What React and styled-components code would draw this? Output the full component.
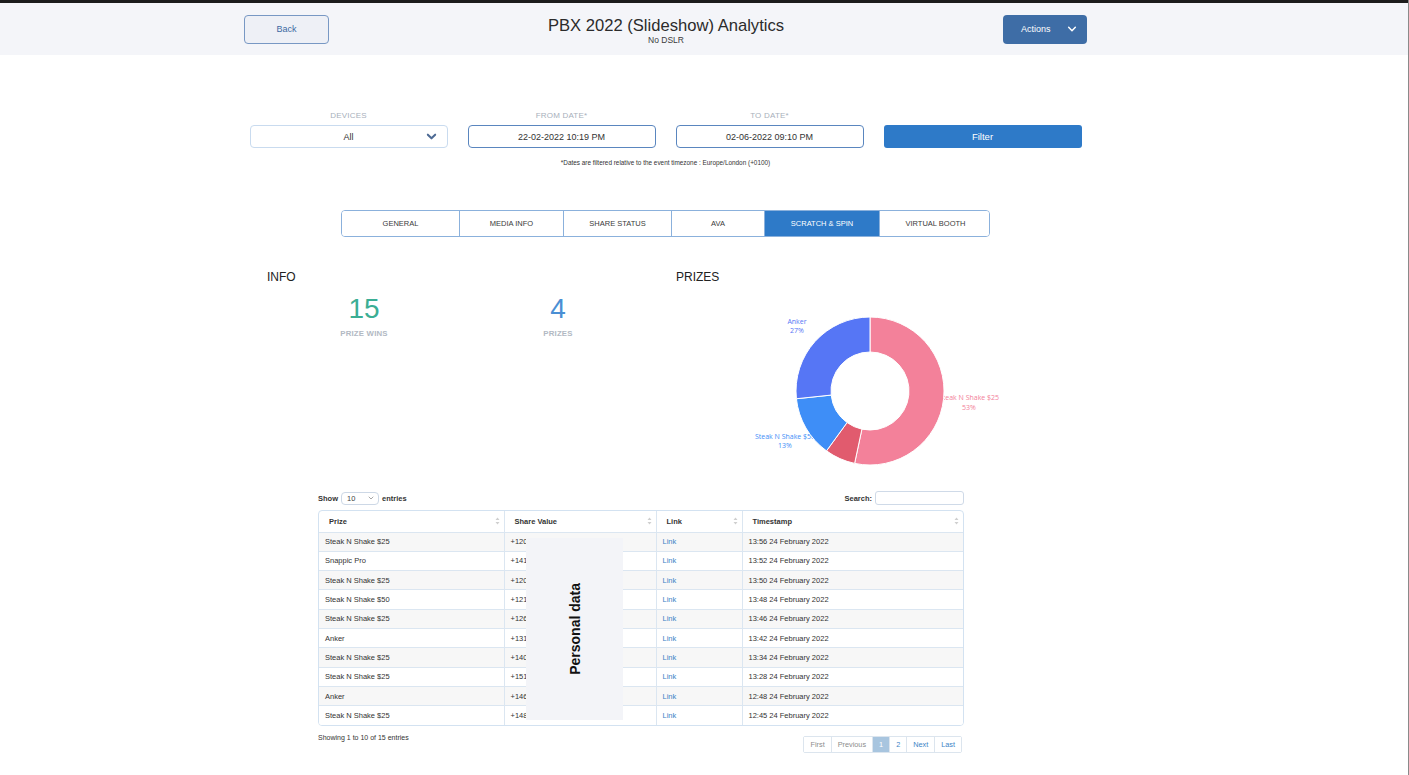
import React from 'react';
import styled, { createGlobalStyle } from 'styled-components';

const prizes = [
  { name: 'Steak N Shake $25', count: 8, color: '#f3819a' },
  { name: 'Snappic Pro', count: 1, color: '#e15b6e' },
  { name: 'Steak N Shake $50', count: 2, color: '#3e8ef7' },
  { name: 'Anker', count: 4, color: '#5676f5' },
];

const rows = [
  { prize: 'Steak N Shake $25', share: '+12075550143', time: '13:56 24 February 2022' },
  { prize: 'Snappic Pro', share: '+14155550112', time: '13:52 24 February 2022' },
  { prize: 'Steak N Shake $25', share: '+12025550176', time: '13:50 24 February 2022' },
  { prize: 'Steak N Shake $50', share: '+12125550190', time: '13:48 24 February 2022' },
  { prize: 'Steak N Shake $25', share: '+12675550121', time: '13:46 24 February 2022' },
  { prize: 'Anker', share: '+13105550188', time: '13:42 24 February 2022' },
  { prize: 'Steak N Shake $25', share: '+14045550137', time: '13:34 24 February 2022' },
  { prize: 'Steak N Shake $25', share: '+15125550164', time: '13:28 24 February 2022' },
  { prize: 'Anker', share: '+14695550129', time: '12:48 24 February 2022' },
  { prize: 'Steak N Shake $25', share: '+14805550155', time: '12:45 24 February 2022' },
];

const tabs = [
  { label: 'GENERAL', width: 117 },
  { label: 'MEDIA INFO', width: 104 },
  { label: 'SHARE STATUS', width: 108 },
  { label: 'AVA', width: 93 },
  { label: 'SCRATCH & SPIN', width: 115, active: true },
  { label: 'VIRTUAL BOOTH', width: 112 },
];

const polar = (cx, cy, r, a) => {
  const rad = (a * Math.PI) / 180;
  return [cx + r * Math.sin(rad), cy - r * Math.cos(rad)];
};

const arc = (cx, cy, r0, r1, a0, a1) => {
  const large = a1 - a0 > 180 ? 1 : 0;
  const [x0, y0] = polar(cx, cy, r1, a0);
  const [x1, y1] = polar(cx, cy, r1, a1);
  const [x2, y2] = polar(cx, cy, r0, a1);
  const [x3, y3] = polar(cx, cy, r0, a0);
  return `M${x0} ${y0} A${r1} ${r1} 0 ${large} 1 ${x1} ${y1} L${x2} ${y2} A${r0} ${r0} 0 ${large} 0 ${x3} ${y3}Z`;
};

const GlobalStyle = createGlobalStyle`
  html, body {
    margin: 0;
    padding: 0;
    background: #fff;
  }
  body {
    font-family: "Liberation Sans", Arial, Helvetica, sans-serif;
    color: #333;
  }
  * {
    box-sizing: border-box;
  }
`;

const Page = styled.div`
  min-height: 775px;
  border-right: 1px solid #8a8a8a;
`;

const TopStrip = styled.div`
  height: 3px;
  background: #1c1c1c;
`;

const HeaderBar = styled.header`
  height: 52px;
  background: #f4f5f9;
`;

const Shell = styled.div`
  width: 1331px;
  height: 100%;
`;

const HeaderInner = styled.div`
  width: 843px;
  height: 100%;
  margin: 0 auto;
  display: flex;
  align-items: center;
  justify-content: space-between;
`;

const BackButton = styled.button`
  width: 85px;
  height: 29px;
  border: 1.5px solid #7898c4;
  border-radius: 4px;
  background: #eef0f6;
  color: #3c6aa3;
  font-family: inherit;
  font-size: 9px;
  padding: 0;
`;

const TitleBlock = styled.div`
  text-align: center;
  padding-top: 4px;
`;

const Title = styled.h1`
  margin: 0;
  font-size: 16.6px;
  line-height: 20px;
  font-weight: 400;
  color: #2b2b2b;
`;

const Subtitle = styled.div`
  margin-top: -1px;
  font-size: 8.5px;
  line-height: 11px;
  color: #3a3a3a;
`;

const ActionsButton = styled.button`
  width: 84px;
  height: 29px;
  border: none;
  border-radius: 4px;
  background: #3e6da6;
  color: #fff;
  font-family: inherit;
  font-size: 9px;
  display: flex;
  align-items: center;
  justify-content: space-between;
  padding: 0 10px 0 18px;
`;

const FilterRow = styled.div`
  width: 832px;
  margin: 56px auto 0;
  display: grid;
  grid-template-columns: 198px 188px 188px 198px;
  column-gap: 20px;
  align-items: end;
`;

const Field = styled.div`
  display: flex;
  flex-direction: column;
  gap: 4px;
`;

const FieldLabel = styled.label`
  font-size: 8px;
  line-height: 10px;
  text-align: center;
  color: #a8b0bb;
  letter-spacing: 0.2px;
`;

const SelectBox = styled.div`
  height: 23px;
  border: 1px solid #c9dbef;
  border-radius: 4px;
  display: grid;
  grid-template-columns: 1fr auto 1fr;
  align-items: center;
  font-size: 9px;
  color: #333;

  svg {
    justify-self: end;
    margin-right: 10px;
  }
`;

const DateBox = styled.div`
  height: 23px;
  border: 1.5px solid #5a86bf;
  border-radius: 4px;
  display: flex;
  align-items: center;
  justify-content: center;
  font-size: 9px;
  color: #333;
`;

const FilterButton = styled.button`
  height: 23px;
  border: none;
  border-radius: 3px;
  background: #2e7ac8;
  color: #fff;
  font-family: inherit;
  font-size: 9.5px;
`;

const Note = styled.p`
  margin: 10px 0 0;
  font-size: 6.4px;
  line-height: 9px;
  text-align: center;
  color: #333;
`;

const TabBar = styled.nav`
  width: 649px;
  height: 27px;
  margin: 43px auto 0;
  display: flex;
  border: 1.5px solid #8bb1dc;
  border-radius: 4px;
  overflow: hidden;
`;

const Tab = styled.div`
  flex: 0 0 ${p => p.$w}px;
  display: flex;
  align-items: center;
  justify-content: center;
  font-size: 7.5px;
  color: ${p => (p.$active ? '#fff' : '#3a3a3a')};
  background: ${p => (p.$active ? '#2e7ac8' : '#fff')};
  border-left: 1px solid #8bb1dc;

  &:first-child {
    border-left: none;
  }
`;

const Analytics = styled.section`
  width: 797px;
  margin: 33px auto 0;
  display: grid;
  grid-template-columns: 388px 388px;
  column-gap: 21px;
  align-items: start;
`;

const SectionHeading = styled.h2`
  margin: 0;
  font-size: 12px;
  line-height: 14px;
  font-weight: 400;
  color: #222;
`;

const StatsRow = styled.div`
  margin-top: 10px;
  display: grid;
  grid-template-columns: 1fr 1fr;
`;

const Stat = styled.div`
  text-align: center;
`;

const StatValue = styled.div`
  font-size: 28px;
  line-height: 30px;
  color: ${p => p.$color};
`;

const StatLabel = styled.div`
  margin-top: 5px;
  font-size: 7.8px;
  line-height: 10px;
  font-weight: 700;
  color: #b2b9c3;
  letter-spacing: 0.2px;
`;

const Chart = styled.svg`
  display: block;
  margin-top: 16px;
  font-family: "Open Sans", "Liberation Sans", sans-serif;
`;

const TableSection = styled.section`
  width: 695px;
  margin: 16px auto 0;
`;

const Controls = styled.div`
  width: 646px;
  height: 14px;
  display: flex;
  align-items: center;
  justify-content: space-between;
  font-size: 7.5px;
  font-weight: 700;
  color: #333;
`;

const ControlGroup = styled.div`
  display: flex;
  align-items: center;
  gap: 3px;
`;

const LengthSelect = styled.div`
  width: 38px;
  height: 13px;
  border: 1px solid #cdd8e6;
  border-radius: 4px;
  display: flex;
  align-items: center;
  justify-content: space-between;
  padding: 0 4px 0 5px;
  font-weight: 400;
  color: #444;
`;

const SearchInput = styled.div`
  width: 89px;
  height: 14px;
  border: 1px solid #cfdae8;
  border-radius: 3px;
`;

const TableWrap = styled.div`
  position: relative;
  width: 646px;
  margin-top: 5px;
  border: 1px solid #d3e2f1;
  border-radius: 4px;
  overflow: hidden;
`;

const Table = styled.table`
  width: 100%;
  border-collapse: collapse;
  table-layout: fixed;
`;

const Th = styled.th`
  width: ${p => p.$w}px;
  height: 21px;
  padding: 0 4px 0 10px;
  text-align: left;
  font-size: 7.5px;
  font-weight: 700;
  color: #333;
  border-right: 1px solid #dbe6f1;
  border-bottom: 1px solid #dbe6f1;

  &:last-child {
    border-right: none;
  }
`;

const HeadInner = styled.div`
  display: flex;
  align-items: center;
  justify-content: space-between;
`;

const Tr = styled.tr`
  height: 19.3px;
  background: ${p => (p.$odd ? '#f7f7f7' : '#fff')};
`;

const Td = styled.td`
  padding: 0 6px;
  font-size: 7.5px;
  color: #333;
  white-space: nowrap;
  overflow: hidden;
  border-right: 1px solid #dbe6f1;
  border-bottom: 1px solid #dbe6f1;

  &:last-child {
    border-right: none;
  }

  tr:last-child & {
    border-bottom: none;
  }
`;

const LinkText = styled.a`
  color: #3d84c6;
  text-decoration: none;
`;

const PrivacyMask = styled.div`
  position: absolute;
  left: 207px;
  top: 27px;
  width: 97px;
  height: 182px;
  background: #f3f4f8;
  display: flex;
  align-items: center;
  justify-content: center;
`;

const MaskText = styled.span`
  writing-mode: vertical-rl;
  transform: rotate(180deg);
  font-size: 14px;
  font-weight: 700;
  color: #111;
`;

const Footer = styled.div`
  width: 646px;
  margin-top: 7px;
  display: flex;
  justify-content: space-between;
  align-items: flex-start;
`;

const ShowingText = styled.div`
  font-size: 7px;
  line-height: 10px;
  color: #333;
`;

const Pagination = styled.div`
  margin: 3px 2px 0 0;
  display: flex;
  height: 17px;
  border: 1px solid #dce5ee;
  border-radius: 2px;
`;

const PageButton = styled.span`
  display: flex;
  align-items: center;
  padding: 0 ${p => p.$pad || 6}px;
  font-size: 7.3px;
  color: ${p => (p.$active ? '#fff' : p.$disabled ? '#8d8d8d' : '#3d84c6')};
  background: ${p => (p.$active ? '#a8c5df' : '#fff')};
  border-left: 1px solid #dce5ee;

  &:first-child {
    border-left: none;
  }
`;

const Chevron = ({ color, size = 10, width = 2 }) => (
  <svg width={size} height={size} viewBox="0 0 12 12" fill="none">
    <path d="M2 4l4 4 4-4" stroke={color} strokeWidth={width} strokeLinecap="round" strokeLinejoin="round" />
  </svg>
);

const SortIcon = () => (
  <svg width="5" height="8" viewBox="0 0 5 8">
    <path d="M2.5 0.5L4.5 3H0.5Z M2.5 7.5L4.5 5H0.5Z" fill="#cfcfcf" />
  </svg>
);

const Donut = () => {
  const cx = 194;
  const cy = 91;
  const total = prizes.reduce((s, p) => s + p.count, 0);
  let angle = 0;
  const slices = prizes.map(p => {
    const a0 = angle;
    const a1 = angle + (p.count / total) * 360;
    angle = a1;
    return { ...p, a0, a1 };
  });

  return (
    <Chart width="388" height="175" viewBox="0 0 388 175">
      <g fontSize="7" textAnchor="middle">
        <text x="121" y="24" fill="#5676f5">Anker</text>
        <text x="121" y="33" fill="#5676f5">27%</text>
        <text x="293" y="100" fill="#f3819a">Steak N Shake $25</text>
        <text x="293" y="110" fill="#f3819a">53%</text>
        <text x="109" y="139" fill="#3e8ef7">Steak N Shake $50</text>
        <text x="109" y="148" fill="#3e8ef7">13%</text>
      </g>
      {slices.map(s => (
        <path key={s.name} d={arc(cx, cy, 39, 74, s.a0, s.a1)} fill={s.color} stroke="#fff" strokeWidth="1" />
      ))}
    </Chart>
  );
};

export default function App() {
  return (
    <Page>
      <GlobalStyle />
      <TopStrip />
      <HeaderBar>
        <Shell>
          <HeaderInner>
            <BackButton>Back</BackButton>
            <TitleBlock>
              <Title>PBX 2022 (Slideshow) Analytics</Title>
              <Subtitle>No DSLR</Subtitle>
            </TitleBlock>
            <ActionsButton>
              <span>Actions</span>
              <Chevron color="#fff" size={10} width={1.8} />
            </ActionsButton>
          </HeaderInner>
        </Shell>
      </HeaderBar>

      <Shell>
        <FilterRow>
          <Field>
            <FieldLabel>DEVICES</FieldLabel>
            <SelectBox>
              <span />
              <span>All</span>
              <Chevron color="#4d6a94" size={11} width={2.2} />
            </SelectBox>
          </Field>
          <Field>
            <FieldLabel>FROM DATE*</FieldLabel>
            <DateBox>22-02-2022 10:19 PM</DateBox>
          </Field>
          <Field>
            <FieldLabel>TO DATE*</FieldLabel>
            <DateBox>02-06-2022 09:10 PM</DateBox>
          </Field>
          <FilterButton>Filter</FilterButton>
        </FilterRow>
        <Note>*Dates are filtered relative to the event timezone : Europe/London (+0100)</Note>

        <TabBar>
          {tabs.map(t => (
            <Tab key={t.label} $w={t.width} $active={t.active}>
              {t.label}
            </Tab>
          ))}
        </TabBar>

        <Analytics>
          <div>
            <SectionHeading>INFO</SectionHeading>
            <StatsRow>
              <Stat>
                <StatValue $color="#3bae94">15</StatValue>
                <StatLabel>PRIZE WINS</StatLabel>
              </Stat>
              <Stat>
                <StatValue $color="#4a8fd4">4</StatValue>
                <StatLabel>PRIZES</StatLabel>
              </Stat>
            </StatsRow>
          </div>
          <div>
            <SectionHeading>PRIZES</SectionHeading>
            <Donut />
          </div>
        </Analytics>

        <TableSection>
          <Controls>
            <ControlGroup>
              <span>Show</span>
              <LengthSelect>
                <span>10</span>
                <Chevron color="#888" size={6} width={1.5} />
              </LengthSelect>
              <span>entries</span>
            </ControlGroup>
            <ControlGroup>
              <span>Search:</span>
              <SearchInput />
            </ControlGroup>
          </Controls>

          <TableWrap>
            <Table>
              <thead>
                <tr>
                  <Th $w={185}><HeadInner><span>Prize</span><SortIcon /></HeadInner></Th>
                  <Th $w={152}><HeadInner><span>Share Value</span><SortIcon /></HeadInner></Th>
                  <Th $w={86}><HeadInner><span>Link</span><SortIcon /></HeadInner></Th>
                  <Th><HeadInner><span>Timestamp</span><SortIcon /></HeadInner></Th>
                </tr>
              </thead>
              <tbody>
                {rows.map((r, i) => (
                  <Tr key={i} $odd={i % 2 === 0}>
                    <Td>{r.prize}</Td>
                    <Td>{r.share}</Td>
                    <Td><LinkText href="#">Link</LinkText></Td>
                    <Td>{r.time}</Td>
                  </Tr>
                ))}
              </tbody>
            </Table>
            <PrivacyMask>
              <MaskText>Personal data</MaskText>
            </PrivacyMask>
          </TableWrap>

          <Footer>
            <ShowingText>Showing 1 to 10 of 15 entries</ShowingText>
            <Pagination>
              <PageButton $disabled>First</PageButton>
              <PageButton $disabled>Previous</PageButton>
              <PageButton $active>1</PageButton>
              <PageButton>2</PageButton>
              <PageButton>Next</PageButton>
              <PageButton>Last</PageButton>
            </Pagination>
          </Footer>
        </TableSection>
      </Shell>
    </Page>
  );
}
